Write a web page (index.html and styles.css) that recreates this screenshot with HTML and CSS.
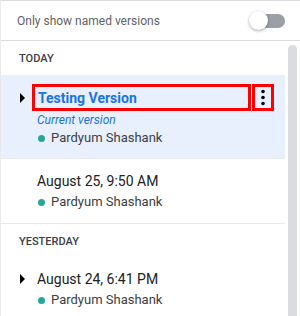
FILE: index.html
```html
<!DOCTYPE html>
<html lang="en">
<head>
    <meta charset="UTF-8">
    <title>Version history</title>
    <link rel="stylesheet" href="styles.css">
</head>
<body>
    <div class="panel">
        <!-- Filter header -->
        <div class="panel-header">
            <span class="filter-label">Only show named versions</span>
            <div class="toggle">
                <span class="toggle-track"></span>
                <span class="toggle-knob"></span>
            </div>
        </div>

        <div class="panel-body">
            <div class="version-list">
                <div class="section-label">TODAY</div>

                <div class="version current">
                    <div class="title-row">
                        <span class="arrow narrow"></span>
                        <span class="title-box">Testing Version</span>
                        <span class="more-box">
                            <svg width="16" height="21" viewBox="0 0 16 21">
                                <circle cx="8" cy="4.5" r="1.8"/>
                                <circle cx="8" cy="10.5" r="1.8"/>
                                <circle cx="8" cy="16.5" r="1.8"/>
                            </svg>
                        </span>
                    </div>
                    <div class="sub current-label">Current version</div>
                    <div class="sub author"><span class="user-dot"></span>Pardyum Shashank</div>
                </div>

                <div class="version divided">
                    <div class="title-row">
                        <span class="arrow empty"></span>
                        <span class="date">August 25, 9:50 AM</span>
                    </div>
                    <div class="sub author"><span class="user-dot"></span>Pardyum Shashank</div>
                </div>

                <div class="section-label divided">YESTERDAY</div>

                <div class="version last">
                    <div class="title-row">
                        <span class="arrow"></span>
                        <span class="date">August 24, 6:41 PM</span>
                    </div>
                    <div class="sub author"><span class="user-dot"></span>Pardyum Shashank</div>
                </div>
            </div>
            <div class="scrollbar"></div>
        </div>
    </div>
</body>
</html>
```

FILE: styles.css
```css
body {
    margin: 0;
    font-family: Roboto, "Liberation Sans", sans-serif;
    background: #fff;
}

.panel {
    width: 300px;
    height: 316px;
    box-sizing: border-box;
    border-top: 1px solid #dadce0;
    border-left: 1px solid #e8eaed;
    overflow: hidden;
}

/* Header with toggle */
.panel-header {
    height: 40px;
    box-sizing: border-box;
    border-bottom: 1px solid #dadce0;
    display: flex;
    align-items: center;
    justify-content: space-between;
    padding: 0 15px 0 16px;
}

.filter-label {
    font-size: 12px;
    color: #5f6368;
}

.toggle {
    position: relative;
    width: 36px;
    height: 20px;
}

.toggle-track {
    position: absolute;
    right: 0;
    top: 3px;
    width: 34px;
    height: 14px;
    border-radius: 7px;
    background: #9aa0a6;
}

.toggle-knob {
    position: absolute;
    left: 0;
    top: 0;
    width: 19px;
    height: 19px;
    border-radius: 50%;
    background: #fff;
    box-shadow: 0 1px 3px rgba(0, 0, 0, 0.35);
}

/* List */
.panel-body {
    display: flex;
}

.version-list {
    width: 284px;
}

.scrollbar {
    width: 9px;
    margin: 4px 3px 0 3px;
    height: 300px;
    background: #dadce0;
    border-radius: 5px 5px 0 0;
}

.section-label {
    height: 34px;
    display: flex;
    align-items: center;
    padding-left: 18px;
    font-size: 11px;
    font-weight: 500;
    color: #3c4043;
}

.divided {
    border-top: 1px solid #e8eaed;
}

.version {
    padding: 13px 0 13px 19px;
}

.version.current {
    background: #e8f0fe;
    padding-top: 9px;
    padding-bottom: 12px;
}

.version.last {
    padding-top: 12px;
}

.title-row {
    display: flex;
    align-items: center;
}

.arrow {
    width: 0;
    height: 0;
    border-top: 5px solid transparent;
    border-bottom: 5px solid transparent;
    border-left: 5px solid #000;
    margin-right: 12px;
}

.arrow.empty {
    border-left-color: transparent;
}

.arrow.narrow {
    margin-right: 7px;
}

.title-box {
    flex: 1;
    height: 27px;
    box-sizing: border-box;
    border: 3px solid #f00;
    padding: 0 3px;
    display: flex;
    align-items: center;
    font-size: 14px;
    font-weight: 700;
    color: #1a73e8;
}

.more-box {
    width: 22px;
    height: 27px;
    box-sizing: border-box;
    border: 3px solid #f00;
    margin: 0 11px 0 1px;
    display: flex;
    align-items: center;
    justify-content: center;
}

.date {
    font-size: 14px;
    line-height: 18px;
    color: #202124;
}

.sub {
    margin-left: 17px;
    font-size: 12px;
    line-height: 16px;
}

.current-label {
    margin-top: 1px;
    font-style: italic;
    color: #1a73e8;
}

.author {
    display: flex;
    align-items: center;
    margin-top: 4px;
    font-size: 13px;
    color: #3c4043;
}

.current .author {
    margin-top: 2px;
}

.user-dot {
    width: 7px;
    height: 7px;
    border-radius: 50%;
    background: #26a69a;
    margin: 0 6px 0 1px;
}
```
